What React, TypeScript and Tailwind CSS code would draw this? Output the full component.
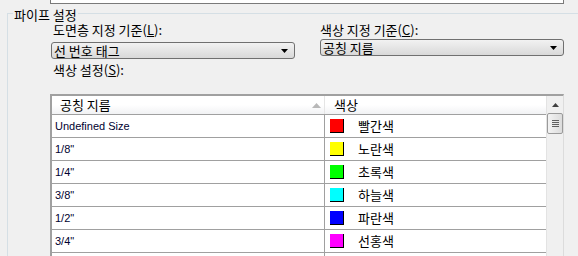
const ko = "font-['Noto_Sans_CJK_KR','Noto_Sans',sans-serif]";
const lat = "font-['Liberation_Sans','Noto_Sans_CJK_KR',sans-serif]";

const rows = [
  { size: "Undefined Size", color: "bg-[#ff0000]", name: "빨간색" },
  { size: '1/8"', color: "bg-[#ffff00]", name: "노란색" },
  { size: '1/4"', color: "bg-[#00ff00]", name: "초록색" },
  { size: '3/8"', color: "bg-[#00ffff]", name: "하늘색" },
  { size: '1/2"', color: "bg-[#0000ff]", name: "파란색" },
  { size: '3/4"', color: "bg-[#ff00ff]", name: "선홍색" },
];

const Combo = ({ value, className }: { value: string; className?: string }) => (
  <div
    className={`h-[17px] flex items-center justify-between rounded-[3px] border border-[#707070] bg-gradient-to-b from-[#f2f2f2] to-[#d9d9d9] pl-[2px] pr-[6px] ${className ?? ""}`}
  >
    <span className={`${ko} text-[13px] leading-[15px] text-black`}>{value}</span>
    {/* 드롭다운 화살표 */}
    <svg width="7" height="4" viewBox="0 0 7 4">
      <path d="M0 0h7L3.5 4z" fill="#000" />
    </svg>
  </div>
);

const Row = ({ size, color, name }: { size?: string; color?: string; name?: string }) => (
  <div className="flex shrink-0 h-[23px] border-b border-[#a0a0a0]">
    <div className={`w-[273px] border-r border-[#a0a0a0] pl-[3px] flex items-center ${lat} text-[11px] leading-[13px] text-[#000030]`}>
      {size}
    </div>
    <div className="flex-1 flex items-center pl-[5px]">
      {color && <div className={`w-[14px] h-[14px] ${color} border-r border-b border-black`} />}
      {name && <span className={`${ko} ml-[14px] text-[13px] leading-[16px] text-black`}>{name}</span>}
    </div>
  </div>
);

export default function App() {
  return (
    <div className="w-[578px] h-[256px] overflow-hidden bg-[#f0f0f0] flex flex-col">
      {/* 위쪽 입력 상자 끝부분 */}
      <div className="shrink-0 ml-[50px] w-[514px] h-[4px] border-x border-b border-[#7a7a7a] bg-white" />

      {/* 그룹 박스 */}
      <div className="relative shrink-0 mt-[9px] ml-[7px] border-l border-t border-[#d5dfe5]">
        <span className={`absolute -top-[7px] left-[5px] px-[1px] bg-[#f0f0f0] ${ko} text-[13px] leading-[16px] text-black`}>
          파이프 설정
        </span>

        <div className="pl-[42px] pt-[8px] flex flex-col">
          <div className="flex gap-[25px]">
            <div className="w-[245px] flex flex-col">
              <span className={`${ko} pl-[3px] text-[13px] leading-[16px] text-black`}>
                도면층 지정 기준(<span className="underline">L</span>):
              </span>
              <Combo value="선 번호 태그" className="mt-[4px] ml-[1px] w-[244px]" />
              <span className={`${ko} pl-[3px] mt-[3px] text-[13px] leading-[16px] text-black`}>
                색상 설정(<span className="underline">S</span>):
              </span>
            </div>
            <div className="w-[244px] flex flex-col">
              <span className={`${ko} text-[13px] leading-[16px] text-black`}>
                색상 지정 기준(<span className="underline">C</span>):
              </span>
              <Combo value="공칭 지름" className="mt-[1px] w-[244px]" />
            </div>
          </div>

          {/* 색상 표 */}
          <div className="mt-[16px] w-[514px] h-[200px] border-l-2 border-t-2 border-r border-[#a0a0a0] border-r-[#dcdcdc] bg-white flex">
            <div className="flex-1 flex flex-col">
              <div className="flex shrink-0 h-[19px] border-b border-[#a0a0a0] bg-gradient-to-b from-white from-50% to-[#f1f2f4]">
                <div className="w-[273px] border-r border-[#e5e5e5] flex items-center justify-between pl-[8px] pr-[3px]">
                  <span className={`${ko} text-[13px] leading-[16px] text-black`}>공칭 지름</span>
                  <svg width="9" height="5" viewBox="0 0 9 5">
                    <path d="M0 5h9L4.5 0z" fill="#b8b8b8" />
                  </svg>
                </div>
                <div className="flex-1 flex items-center pl-[9px]">
                  <span className={`${ko} text-[13px] leading-[16px] text-black`}>색상</span>
                </div>
              </div>
              {rows.map((r) => (
                <Row key={r.size} {...r} />
              ))}
              <Row />
            </div>

            {/* 스크롤 막대 */}
            <div className="w-[17px] bg-[#f0f0f0] border-l border-[#e3e3e3] flex flex-col items-center">
              <div className="h-[17px] w-full flex items-center justify-center">
                <svg width="7" height="4" viewBox="0 0 7 4">
                  <path d="M0 4h7L3.5 0z" fill="#404040" />
                </svg>
              </div>
              <div className="w-[16px] h-[21px] rounded-[2px] border border-[#9a9a9a] bg-gradient-to-r from-[#f3f3f3] to-[#dcdcdc] flex flex-col items-center justify-center gap-[1px]">
                <div className="w-[7px] h-[1px] bg-[#5f5f5f]" />
                <div className="w-[7px] h-[1px] bg-[#5f5f5f]" />
                <div className="w-[7px] h-[1px] bg-[#5f5f5f]" />
                <div className="w-[7px] h-[1px] bg-[#5f5f5f]" />
              </div>
            </div>
          </div>
        </div>
      </div>
    </div>
  );
}
